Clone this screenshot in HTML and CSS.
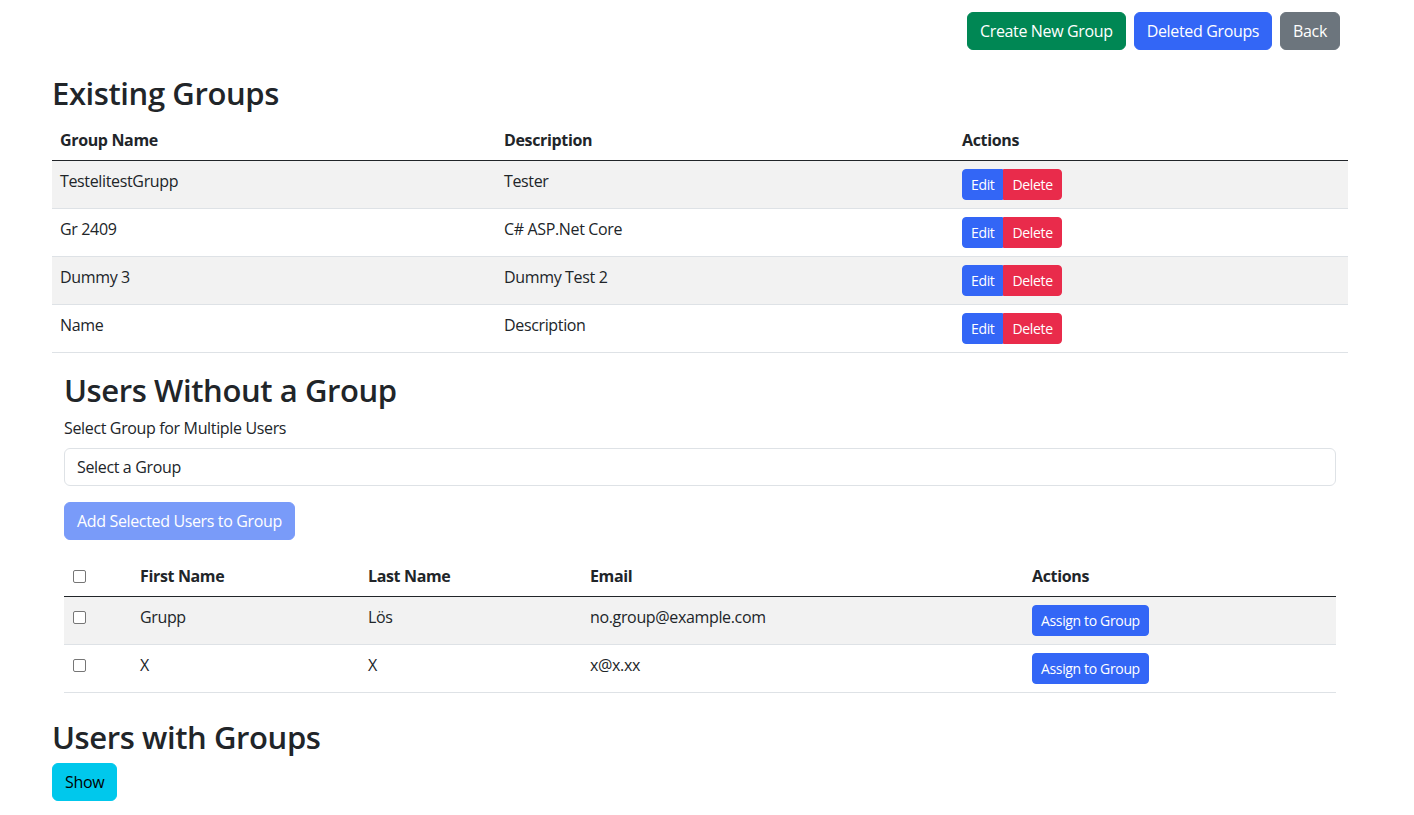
FILE: index.html
```html
<!DOCTYPE html>
<html lang="en">
<head>
<meta charset="utf-8">
<title>Groups</title>
<link rel="stylesheet" href="styles.css">
</head>
<body>
<header class="topbar"></header>
<main class="container">
  <div class="toolbar">
    <button class="btn btn-success">Create New Group</button>
    <button class="btn btn-primary">Deleted Groups</button>
    <button class="btn btn-secondary">Back</button>
  </div>

  <h2 class="heading heading-first">Existing Groups</h2>
  <table class="table groups">
    <thead>
      <tr><th class="c-name">Group Name</th><th class="c-desc">Description</th><th>Actions</th></tr>
    </thead>
    <tbody>
      <tr class="striped"><td>TestelitestGrupp</td><td>Tester</td><td><div class="btn-group"><button class="btn btn-sm btn-primary">Edit</button><button class="btn btn-sm btn-danger">Delete</button></div></td></tr>
      <tr><td>Gr 2409</td><td>C# ASP.Net Core</td><td><div class="btn-group"><button class="btn btn-sm btn-primary">Edit</button><button class="btn btn-sm btn-danger">Delete</button></div></td></tr>
      <tr class="striped"><td>Dummy 3</td><td>Dummy Test 2</td><td><div class="btn-group"><button class="btn btn-sm btn-primary">Edit</button><button class="btn btn-sm btn-danger">Delete</button></div></td></tr>
      <tr><td>Name</td><td>Description</td><td><div class="btn-group"><button class="btn btn-sm btn-primary">Edit</button><button class="btn btn-sm btn-danger">Delete</button></div></td></tr>
    </tbody>
  </table>

  <section class="inner">
    <h2 class="heading">Users Without a Group</h2>
    <label class="form-label" for="grp">Select Group for Multiple Users</label>
    <select id="grp" class="form-control"><option>Select a Group</option></select>
    <button class="btn btn-primary" disabled>Add Selected Users to Group</button>
    <table class="table users">
      <thead>
        <tr><th class="c-chk"><input type="checkbox" class="chk"></th><th class="c-first">First Name</th><th class="c-last">Last Name</th><th class="c-email">Email</th><th>Actions</th></tr>
      </thead>
      <tbody>
        <tr class="striped"><td><input type="checkbox" class="chk"></td><td>Grupp</td><td>Lös</td><td>no.group@example.com</td><td><button class="btn btn-sm btn-primary">Assign to Group</button></td></tr>
        <tr><td><input type="checkbox" class="chk"></td><td>X</td><td>X</td><td>x@x.xx</td><td><button class="btn btn-sm btn-primary">Assign to Group</button></td></tr>
      </tbody>
    </table>
  </section>

  <h2 class="heading heading-last">Users with Groups</h2>
  <button class="btn btn-info">Show</button>
</main>
</body>
</html>
```

FILE: styles.css
```css
* { box-sizing: border-box; }
html, body { margin: 0; padding: 0; }
body {
  font-family: "Open Sans", "Noto Sans", "Liberation Sans", sans-serif;
  font-size: 16px;
  line-height: 1.5;
  letter-spacing: -0.35px;
  color: #212529;
  background: #fff;
}
.topbar {
  height: 0;
  box-shadow: 0 2px 10px rgba(0, 0, 0, 0.07);
}
.container {
  width: 1296px;
  margin-left: 52px;
  padding-top: 12px;
}
.toolbar {
  display: flex;
  justify-content: flex-end;
  gap: 8px;
  padding-right: 8px;
}
.heading {
  font-size: 31px;
  font-weight: 600;
  line-height: 36px;
  padding-top: 3px;
  letter-spacing: -0.4px;
  margin: 23px 0 9px;
}
.heading-first { margin-top: 20px; padding-top: 5px; }
.heading-last { margin-bottom: 8px; }
.btn {
  display: inline-block;
  font-family: inherit;
  font-size: 16px;
  line-height: 24px;
  letter-spacing: inherit;
  padding: 6px 12px;
  border: 1px solid transparent;
  border-radius: 6px;
  color: #fff;
  cursor: pointer;
  vertical-align: middle;
}
.btn-sm {
  font-size: 14px;
  line-height: 21px;
  padding: 4px 8px;
  border-radius: 4px;
}
.btn-success { background: #008754; border-color: #008754; }
.btn-primary { background: #3366f6; border-color: #3366f6; }
.btn-secondary { background: #6c757d; border-color: #6c757d; }
.btn-danger { background: #e92b4b; border-color: #e92b4b; }
.btn-info { background: #00c8ec; border-color: #00c8ec; color: #000; }
.btn:disabled { opacity: 0.65; cursor: default; }
.btn-group { display: inline-flex; }
.btn-group .btn:first-child { border-top-right-radius: 0; border-bottom-right-radius: 0; }
.btn-group .btn:last-child { border-top-left-radius: 0; border-bottom-left-radius: 0; }

.table {
  width: 100%;
  border-collapse: collapse;
  margin-bottom: 16px;
  table-layout: fixed;
}
.table th, .table td {
  text-align: left;
  vertical-align: top;
  padding: 8px;
  border-bottom: 1px solid #dee2e6;
}
.table th { font-weight: 700; vertical-align: bottom; }
.table thead th { border-bottom: 1px solid #212529; }
.table tr.striped td { background: #f2f2f2; }
.c-name { width: 444px; }
.c-desc { width: 458px; }

.inner {
  padding: 0 12px;
}
.inner .heading { margin-top: 16px; margin-bottom: 8px; }
.form-label {
  display: block;
  margin-bottom: 8px;
}
.form-control {
  display: block;
  width: 100%;
  font-family: inherit;
  font-size: 16px;
  line-height: 24px;
  letter-spacing: inherit;
  padding: 6px 12px;
  color: #212529;
  background: #fff;
  border: 1px solid #dee2e6;
  border-radius: 6px;
  appearance: none;
  -webkit-appearance: none;
  margin-bottom: 16px;
}
.users { margin-top: 16px; }
.c-chk { width: 68px; }
.c-first { width: 228px; }
.c-last { width: 222px; }
.c-email { width: 442px; }
.chk {
  appearance: none;
  -webkit-appearance: none;
  width: 13px;
  height: 13px;
  margin: 0 0 0 1px;
  border: 1px solid #767676;
  border-radius: 2px;
  background: #fff;
  vertical-align: -1px;
}
.users td .chk { margin-top: 6px; }
```
